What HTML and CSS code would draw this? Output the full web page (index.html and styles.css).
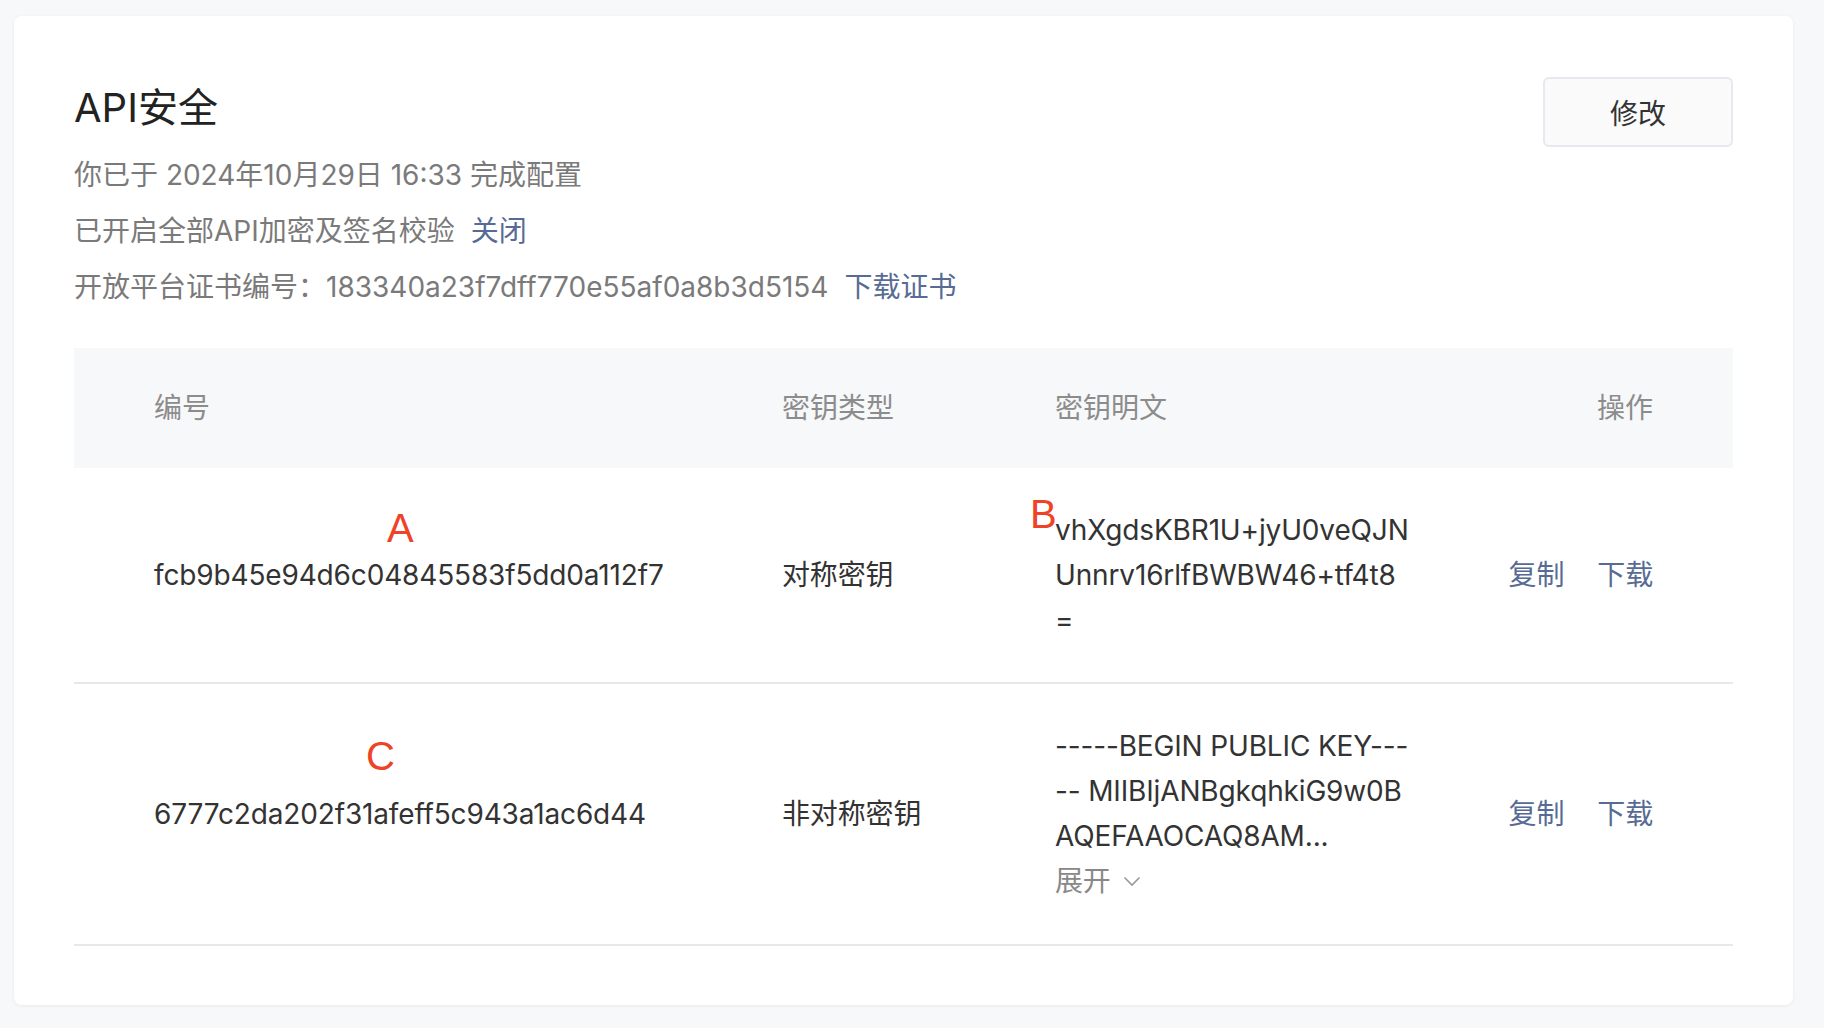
FILE: index.html
```html
<!DOCTYPE html>
<html lang="zh-CN">
<head>
    <meta charset="UTF-8">
    <meta name="viewport" content="width=device-width, initial-scale=1.0">
    <title>API安全</title>
    <link rel="stylesheet" href="styles.css">
</head>
<body>
    <div class="card">
        <div class="card-head">
            <div class="info">
                <h1>API安全</h1>
                <p>你已于 2024年10月29日 16:33 完成配置</p>
                <p>已开启全部API加密及签名校验<a href="#" class="link">关闭</a></p>
                <p>开放平台证书编号：183340a23f7dff770e55af0a8b3d5154<a href="#" class="link">下载证书</a></p>
            </div>
            <button class="btn">修改</button>
        </div>

        <div class="table">
            <div class="row head">
                <div>编号</div>
                <div>密钥类型</div>
                <div>密钥明文</div>
                <div class="ops">操作</div>
            </div>

            <div class="row">
                <div class="cell-id">
                    <span class="mark mark-a">A</span>
                    fcb9b45e94d6c04845583f5dd0a112f7
                </div>
                <div>对称密钥</div>
                <div class="key">
                    <span class="mark mark-b">B</span>
                    <span>vhXgdsKBR1U+jyU0veQJN</span>
                    <span>Unnrv16rlfBWBW46+tf4t8</span>
                    <span>=</span>
                </div>
                <div class="ops">
                    <a href="#" class="link">复制</a>
                    <a href="#" class="link">下载</a>
                </div>
            </div>

            <div class="row">
                <div class="cell-id">
                    <span class="mark mark-c">C</span>
                    6777c2da202f31afeff5c943a1ac6d44
                </div>
                <div>非对称密钥</div>
                <div class="key">
                    <span>-----BEGIN PUBLIC KEY---</span>
                    <span>-- MIIBIjANBgkqhkiG9w0B</span>
                    <span>AQEFAAOCAQ8AM...</span>
                    <a href="#" class="expand">展开
                        <svg width="18" height="11" viewBox="0 0 18 11"><path d="M1.5 1.5 L9 9 L16.5 1.5" fill="none" stroke="#999" stroke-width="1.6"/></svg>
                    </a>
                </div>
                <div class="ops">
                    <a href="#" class="link">复制</a>
                    <a href="#" class="link">下载</a>
                </div>
            </div>
        </div>
    </div>
</body>
</html>
```

FILE: styles.css
```css
body {
    margin: 0;
    padding: 16px 31px 24px 14px;
    background: #f7f8fa;
    font-family: Inter, "Noto Sans CJK SC", sans-serif;
    color: #333;
}

.card {
    background: #fff;
    border-radius: 8px;
    box-shadow: 0 1px 4px rgba(0, 0, 0, 0.06);
    padding: 61px 60px 59px 60px;
    position: relative;
}

.card-head {
    display: flex;
    justify-content: space-between;
    align-items: flex-start;
}

h1 {
    margin: 0 0 8px;
    font-size: 40px;
    line-height: 62px;
    font-weight: 400;
    color: #222;
}

.info p {
    margin: 0;
    font-size: 28px;
    line-height: 56px;
    color: #7a7a7a;
}

.link {
    color: #576b95;
    text-decoration: none;
}

.info .link {
    margin-left: 16px;
}

.btn {
    width: 190px;
    height: 70px;
    border: 2px solid #e6e9ee;
    border-radius: 6px;
    background: #fafafa;
    font-family: inherit;
    font-size: 28px;
    color: #333;
    cursor: pointer;
}

.table {
    margin-top: 33px;
}

.row {
    display: grid;
    grid-template-columns: 628px 273px 1fr auto;
    align-items: center;
    padding: 40px 80px;
    font-size: 28px;
    line-height: 44.8px;
    letter-spacing: -0.15px;
    border-bottom: 2px solid #e7e7ec;
}

.row.head {
    background: #f7f8fa;
    color: #8c8c8c;
    height: 120px;
    padding: 0 80px;
    box-sizing: border-box;
    border-bottom: none;
    letter-spacing: 0;
}

.cell-id,
.key {
    position: relative;
}

.key span {
    display: block;
}

.ops {
    display: flex;
    gap: 33px;
    justify-content: flex-end;
}

.expand {
    display: flex;
    align-items: center;
    gap: 12px;
    color: #888;
    text-decoration: none;
}

.mark {
    position: absolute;
    color: #ee4326;
    font-size: 40px;
    line-height: 1;
    font-family: "Liberation Sans", Arial, sans-serif;
}

.mark-a {
    left: 233px;
    top: -45px;
}

.mark-b {
    left: -25px;
    top: -14px;
}

.mark-c {
    left: 212px;
    top: -56px;
}
```
